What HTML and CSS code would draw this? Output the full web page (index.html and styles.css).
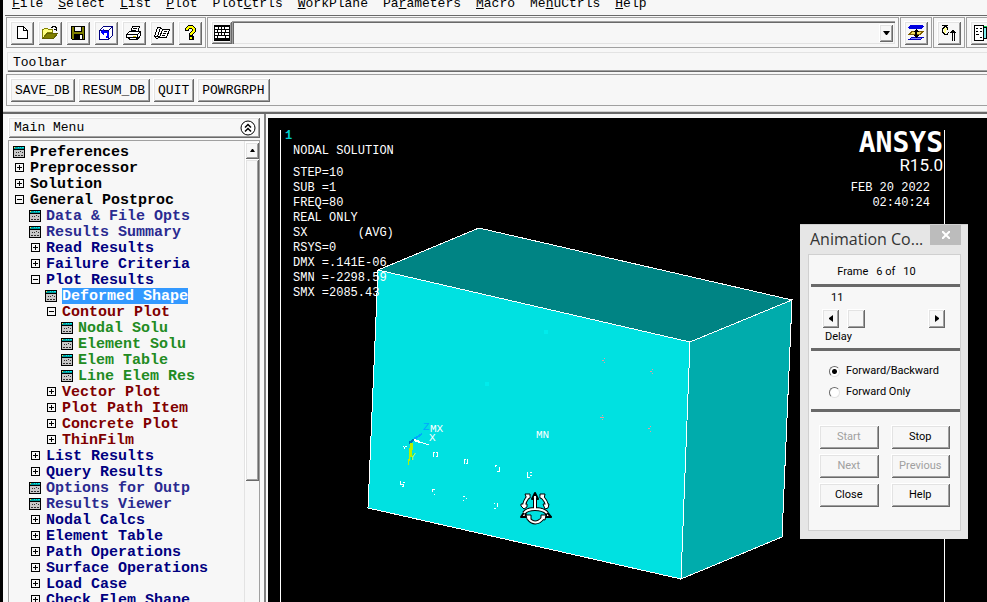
FILE: index.html
```html
<!DOCTYPE html>
<html lang="en">
<head>
<meta charset="utf-8">
<title>ANSYS</title>
<link rel="stylesheet" href="styles.css">
</head>
<body>
<svg class="defs" aria-hidden="true">
  <symbol id="form" viewBox="0 0 12 12">
    <path fill="#000" d="M0 0h12v12H0z"/><path fill="#c8c8c8" d="M1 4h10v7H1z"/><path fill="#009c9c" d="M1 1h10v2H1z"/>
    <path fill="#00f0f0" d="M5 1h1v1H5zM7 1h1v1H7zM9 1h2v1H9z"/><path fill="#ffe040" d="M1 1h1v1H1z"/>
    <path fill="#303030" d="M3 6h1v1H3zM5 6h1v1H5zM7 5h1v1H7zM9 6h1v1H9zM2 9h2v1H2zM5 9h2v1H5zM8 9h2v1H8z"/>
  </symbol>
  <symbol id="plus" viewBox="0 0 12 12"><path fill="none" stroke="#000" d="M2.500 1.500h8v8h-8zM4 5.500h5M6.500 3v5"/></symbol>
  <symbol id="minus" viewBox="0 0 12 12"><path fill="none" stroke="#000" d="M2.500 1.500h8v8h-8zM4 5.500h5"/></symbol>
</svg>
<div class="app">
  <nav class="menubar">
    <a href="#"><u>F</u>ile</a><a href="#"><u>S</u>elect</a><a href="#"><u>L</u>ist</a><a href="#"><u>P</u>lot</a><a href="#">Plot<u>C</u>trls</a><a href="#"><u>W</u>orkPlane</a><a href="#">Pa<u>r</u>ameters</a><a href="#"><u>M</u>acro</a><a href="#">Me<u>n</u>uCtrls</a><a href="#"><u>H</u>elp</a>
  </nav>

  <div class="tools">
    <div class="frame">
      <button class="raised tool" aria-label="New"><svg viewBox="0 0 16 16"><path fill="#fff" stroke="#000" d="M3.500 1.500h6l4 4v8h-10zM9.500 1.500v4h4"/></svg></button>
      <button class="raised tool" aria-label="Open"><svg viewBox="0 0 16 16"><path fill="#ffff80" stroke="#808000" d="M.5 13.500v-9h1l1-1h3l1 1h4v3h-5z"/><path fill="#808000" stroke="#606000" d="M1 13.500l4-5h10.500l-4 5z"/><path fill="none" stroke="#000" d="M9 2.500h1l1-1h2l1 1v3M11.500 4.500h3V2"/></svg></button>
      <button class="raised tool" aria-label="Save"><svg viewBox="0 0 16 16"><path fill="#808000" stroke="#000" d="M1.500 1.500h13v13h-12l-1-1z"/><path fill="#f7f7f7" stroke="#000" d="M4.500 1.500h7v5h-7z"/><path fill="#000" d="M4 9h9v5H4z"/><path fill="#fff" d="M10 10h2v4h-2z"/></svg></button>
      <button class="raised tool" aria-label="Resume"><svg viewBox="0 0 16 16"><path fill="#fff" stroke="#000080" d="M1.500 5.500l4-4h9v9l-4 4h-9zM1.500 5.500h9v9M10.500 5.500l4-4"/><path fill="none" stroke="#00f" stroke-width="2" d="M5 7h3q3 0 2 4l-2 2"/><path fill="#00f" d="M2 7l4-4v8z"/></svg></button>
      <button class="raised tool" aria-label="Print"><svg viewBox="0 0 16 16"><path fill="#fff" stroke="#000" d="M4.500 7.500l2-6h7l-2 6zM7 3.500h4M6 5.500h4"/><path fill="#fff" stroke="#000" d="M.5 9.500l3-3h11l-3 3zM.5 9.500h11v3H.5zM2.500 12.500h8v2h-7zM11.500 9.500l3-3v4l-3 4z"/><path stroke="#e0c800" d="M7 11.500h3"/></svg></button>
      <button class="raised tool" aria-label="Report"><svg viewBox="0 0 16 16"><path fill="#fff" stroke="#000" d="M3.500 2.500h3l-3 9h-3zM6.500 2.500l2 2h7l-3 8h-7l-2-1M.5 11.500l2 2 3-1M8.500 4.500l-3 8M10 6.500h3M9 8.500h3M8 10.500h3"/></svg></button>
      <button class="raised tool" aria-label="Help"><svg viewBox="0 0 16 16"><path fill="none" stroke="#000" stroke-width="4" d="M5 6V4l2-2h3l2 2v2l-3 3v2"/><path fill="#000" d="M7 11h5v4H7z"/><path fill="none" stroke="#ff0" stroke-width="2" d="M5 5V4l2-2h3l2 2v2l-3 3v1M9 12v2"/></svg></button>
    </div>
    <div class="frame command">
      <button class="raised keys" aria-label="Command window"><svg viewBox="0 0 16 16"><path d="M0 0h16v16H0z"/><path fill="#fff" d="M1 2h3v2H1zM5 2h2v2H5zM8 2h2v2H8zM11 2h4v2h-4zM1 5h2v2H1zM4 5h3v2H4zM8 5h3v2H8zM12 5h3v2h-3zM1 8h3v2H1zM5 8h2v2H5zM8 8h2v2H8zM11 8h4v2h-4zM1 11h2v2H1zM4 11h7v2H4zM12 11h3v2h-3z"/></svg></button>
      <div class="combo"><input type="text" aria-label="Command"><button class="raised drop" aria-label="History"><svg viewBox="0 0 7 4"><path d="M0 0h7L4 4H3z"/></svg></button></div>
    </div>
    <div class="frame"><button class="raised tool" aria-label="Raise hidden"><svg viewBox="0 0 16 16"><path fill="#0000e0" d="M2 0h12l2 1-2 3H2L0 3z"/><path fill="#f0e060" stroke="#806000" d="M1 9.500l3-3h11l-3 3z"/><path fill="#8080ff" stroke="#0000c0" d="M1 14.500l3-2h11l-3 2z"/><path d="M8 4l3 3H9v3h2l-3 3-3-3h2V7H5z"/></svg></button></div>
    <div class="frame"><button class="raised tool" aria-label="Reset picking"><svg viewBox="0 0 16 16"><path fill="none" stroke="#000" d="M1 .5h6M3.500 1v1l-2 2v3l2 2h3l1-2M4.500 1l2 2v2"/><path fill="#ffff90" d="M3 3h2v5H3zM5 3h1v2H5z"/><path d="M12 4l3 4h-1v8h-1V8h-1v8h-1V8H9z"/></svg></button></div>
    <div class="frame last"><button class="raised tool" aria-label="Contact manager"><svg viewBox="0 0 16 16"><path fill="#00e050" d="M10 1h6v13h-6z"/><path fill="#fff" stroke="#000" d="M.5.5h9v15h-9z"/><path fill="#80f0f0" stroke="#000" d="M9.500 2.500h3v11h-3z"/><path stroke="#000" d="M2 3.500h2M6 3.500h2M2 6.500h2M6 6.500h2M2 9.500h3M6 12.500h2" /></svg></button></div>
  </div>

  <h2 class="caption">Toolbar</h2>
  <div class="frame abbreviations">
    <button class="raised">SAVE_DB</button><button class="raised">RESUM_DB</button><button class="raised">QUIT</button><button class="raised">POWRGRPH</button>
  </div>

  <main class="work">
    <aside class="side">
      <div class="side-head"><h2>Main Menu</h2><button aria-label="Collapse"><svg viewBox="0 0 16 16"><circle cx="8" cy="8" r="7" fill="#fff" stroke="#000"/><path fill="none" stroke="#000" stroke-width="1.500" d="M5 7.500l3-3 3 3M5 11.500l3-3 3 3"/></svg></button></div>
      <div class="tree">
        <ul>
          <li><a href="#"><svg><use href="#form"/></svg><span>Preferences</span></a></li>
          <li><a href="#"><svg><use href="#plus"/></svg><span>Preprocessor</span></a></li>
          <li><a href="#"><svg><use href="#plus"/></svg><span>Solution</span></a></li>
          <li><a href="#"><svg><use href="#minus"/></svg><span>General Postproc</span></a>
            <ul class="navy">
              <li><a href="#" class="leaf"><svg><use href="#form"/></svg><span>Data &amp; File Opts</span></a></li>
              <li><a href="#" class="leaf"><svg><use href="#form"/></svg><span>Results Summary</span></a></li>
              <li><a href="#"><svg><use href="#plus"/></svg><span>Read Results</span></a></li>
              <li><a href="#"><svg><use href="#plus"/></svg><span>Failure Criteria</span></a></li>
              <li><a href="#"><svg><use href="#minus"/></svg><span>Plot Results</span></a>
                <ul class="maroon">
                  <li><a href="#" class="selected"><svg><use href="#form"/></svg><span>Deformed Shape</span></a></li>
                  <li><a href="#"><svg><use href="#minus"/></svg><span>Contour Plot</span></a>
                    <ul class="green">
                      <li><a href="#"><svg><use href="#form"/></svg><span>Nodal Solu</span></a></li>
                      <li><a href="#"><svg><use href="#form"/></svg><span>Element Solu</span></a></li>
                      <li><a href="#"><svg><use href="#form"/></svg><span>Elem Table</span></a></li>
                      <li><a href="#"><svg><use href="#form"/></svg><span>Line Elem Res</span></a></li>
                    </ul>
                  </li>
                  <li><a href="#"><svg><use href="#plus"/></svg><span>Vector Plot</span></a></li>
                  <li><a href="#"><svg><use href="#plus"/></svg><span>Plot Path Item</span></a></li>
                  <li><a href="#"><svg><use href="#plus"/></svg><span>Concrete Plot</span></a></li>
                  <li><a href="#"><svg><use href="#plus"/></svg><span>ThinFilm</span></a></li>
                </ul>
              </li>
              <li><a href="#"><svg><use href="#plus"/></svg><span>List Results</span></a></li>
              <li><a href="#"><svg><use href="#plus"/></svg><span>Query Results</span></a></li>
              <li><a href="#" class="leaf"><svg><use href="#form"/></svg><span>Options for Outp</span></a></li>
              <li><a href="#" class="leaf"><svg><use href="#form"/></svg><span>Results Viewer</span></a></li>
              <li><a href="#"><svg><use href="#plus"/></svg><span>Nodal Calcs</span></a></li>
              <li><a href="#"><svg><use href="#plus"/></svg><span>Element Table</span></a></li>
              <li><a href="#"><svg><use href="#plus"/></svg><span>Path Operations</span></a></li>
              <li><a href="#"><svg><use href="#plus"/></svg><span>Surface Operations</span></a></li>
              <li><a href="#"><svg><use href="#plus"/></svg><span>Load Case</span></a></li>
              <li><a href="#"><svg><use href="#plus"/></svg><span>Check Elem Shape</span></a></li>
            </ul>
          </li>
        </ul>
        <div class="scroll"><button class="raised" aria-label="Scroll up"><svg viewBox="0 0 5 3"><path d="M2 0h1l2 3H0z"/></svg></button><div class="raised thumb"></div></div>
      </div>
    </aside>

    <section class="plot">
      <svg class="scene" viewBox="268 118 719 484" preserveAspectRatio="xMinYMin slice" shape-rendering="crispEdges">
        <path stroke="#fff" d="M280.500 130v480M944.500 130v480"/>
        <g stroke="#fff" stroke-width="1">
          <path fill="#008484" d="M378 270L479 228 792 300 690 342z"/>
          <path fill="#00acac" d="M690 342L792 300 782 537 681 579z"/>
          <path fill="#00e1e1" d="M378 270L690 342 681 579 368 508z"/>
        </g>
        <g class="labels">
          <text x="423" y="430" fill="#00a8ff">Z</text><text x="430" y="432" fill="#fff">MX</text><text x="429" y="441" fill="#fff">X</text><text x="409" y="460" fill="#c0ff00">Y</text><text x="536" y="438" fill="#fff">MN</text>
        </g>
        <path stroke="#0078b8" stroke-width="2" d="M409 443l6-4"/><path stroke="#00a8ff" stroke-width="2" d="M414 439l8-5"/>
        <path stroke="#fff" stroke-width="2" d="M414 440l6 2"/><path stroke="#fff" d="M420 442l9 3"/>
        <path fill="#b8f000" d="M410 443h3l-1 14-2 0-1 8h-1z"/>
        <g fill="none" stroke="#fff">
          <path d="M403 446.500h1M405 446.500h2M404.500 447v2M433 452.500h2M433.500 452v5M436 452.500h1.500v4h-2M464 459.500h2M464.500 459v5M467.500 459v4h-2M495 465.500h2M495.500 465v2M499.500 467v4h-3M527.500 472v5h2M530 472.500h2M530 475.500h2M400.500 481v3h3v2h-2M403 482.500h2M432 489.500h3M432.500 489v3M434 494.500h1M463 496.500h2M463 500.500h1M466 498.500h1M494 503.500h1M494 508.500h2M497.500 503v4"/>
        </g>
        <path stroke="#e0a0a0" d="M602 360.500h2M604 358.500h1M604 362.500h1M650 371.500h2M652 369.500h1M652 373.500h1M600 417.500h4M602 415.500h1M602 419.500h1M648 428.500h2M650 426.500h1M650 431.500h1"/>
        <path fill="#00ecec" d="M544 330h4v4h-4zM485 382h4v4h-4z"/>
        <g shape-rendering="auto" stroke-linejoin="round" fill="none">
          <path stroke="#000" stroke-width="4" d="M535 496v13M524 513q3-4 11-4t12 4M524 507q0-6 5-11M541 496q6 5 6 11M528 518q7 9 15 0"/>
          <path stroke="#000" stroke-width="2" fill="#fff" d="M535 493l3 6h-6zM525 511l1 6h-5zM546 511l5 6h-5z"/>
          <path stroke="#000" fill="#fff" d="M521 504h6v3l-3 2-3-3zM543 504h6l-1 4-3 1zM525 494h5v4l-3 1zM540 494h5l-1 5-4-1zM526 515h5v5l-4-1zM541 515h5l-1 5-4-1z"/>
          <path stroke="#fff" stroke-width="2" d="M535 496v13M524 513q3-4 11-4t12 4M524 507q0-6 5-11M541 496q6 5 6 11M528 518q7 9 15 0"/>
        </g>
      </svg>
      <div class="readout">
        <b>1</b>
        <p>NODAL SOLUTION</p>
        <pre>STEP=10
SUB =1
FREQ=80
REAL ONLY
SX       (AVG)
RSYS=0
DMX =.141E-06
SMN =-2298.59
SMX =2085.43</pre>
      </div>
      <div class="brand"><strong>ANSYS</strong><span>R15.0</span><pre>FEB 20 2022
02:40:24</pre></div>

      <form class="dialog">
        <header><h3>Animation Co...</h3><button type="button" aria-label="Close window"><svg viewBox="0 0 8 8"><path stroke="#fff" stroke-width="2" d="M0 0l8 8M8 0L0 8"/></svg></button></header>
        <div class="panel">
          <p class="count"><span>Frame</span><span>6 of</span><span>10</span></p>
          <div class="delay">
            <output for="delay">11</output>
            <div class="slider"><button type="button" class="raised" aria-label="Decrease"><svg viewBox="0 0 4 7"><path d="M4 0v7L0 4V3z"/></svg></button><input id="delay" type="range" min="0" max="100" value="11"><button type="button" class="raised" aria-label="Increase"><svg viewBox="0 0 4 7"><path d="M0 0v7l4-3V3z"/></svg></button></div>
            <label for="delay">Delay</label>
          </div>
          <div class="modes">
            <label><input type="radio" name="mode" checked>Forward/Backward</label>
            <label><input type="radio" name="mode">Forward Only</label>
          </div>
          <div class="actions">
            <button type="button" class="raised" disabled>Start</button><button type="button" class="raised">Stop</button>
            <button type="button" class="raised" disabled>Next</button><button type="button" class="raised" disabled>Previous</button>
            <button type="button" class="raised">Close</button><button type="button" class="raised">Help</button>
          </div>
        </div>
      </form>
    </section>
  </main>
</div>
</body>
</html>
```
FILE: styles.css
```css
* { box-sizing: border-box; }
body { margin: 0; background: #000; color: #000; font: 13px/16px "Liberation Mono", monospace; }
button, input { font: inherit; color: inherit; }
button { padding: 0; border: 0; background: #f7f7f7; display: flex; align-items: center; justify-content: center; }
h2, h3, p, pre, ul { margin: 0; padding: 0; font: inherit; }
ul { list-style: none; }
a { color: inherit; text-decoration: none; }
svg { display: block; }
.defs { position: absolute; width: 0; height: 0; }

.app { height: 100vh; display: flex; flex-direction: column; overflow: hidden; background: #f7f7f7; border-left: 3px solid #000; }
.raised { box-shadow: inset 1px 1px #fff, inset -1px -1px #696969, inset 2px 2px #e3e3e3, inset -2px -2px #a0a0a0; background: #f7f7f7; }
.frame { border: 1px solid #a0a0a0; display: flex; align-items: center; }

.menubar { flex: none; height: 16px; margin-left: 2px; padding: 0 7px 3px; display: flex; align-items: flex-end; gap: 15px; overflow: hidden; border-bottom: 1px solid #696969; }

.tools { flex: none; margin: 1px 0 4px 3px; display: flex; gap: 1px; }
.tools .frame { height: 31px; padding: 0 3px; gap: 4px; }
.tool { width: 24px; height: 24px; }
.tool svg, .keys svg { width: 16px; height: 16px; shape-rendering: crispEdges; }
.tools .command { flex: 1; gap: 0; }
.keys { width: 21px; height: 23px; }
.combo { flex: 1; height: 23px; display: flex; align-items: center; padding: 3px 2px 2px 4px; box-shadow: inset 1px 1px #a0a0a0, inset 2px 2px #696969, inset -1px -1px #e3e3e3; }
.combo input { flex: 1; min-width: 0; border: 0; padding: 0; background: transparent; outline: 0; }
.drop { width: 14px; height: 18px; }
.drop svg { width: 7px; height: 4px; }
.tools .last { width: 21px; overflow: hidden; border-right: 0; }
.last .tool { flex: none; }

.caption { flex: none; height: 20px; margin-left: 4px; padding: 2px 5px; border-top: 1px solid #e3e3e3; border-left: 1px solid #e3e3e3; box-shadow: inset 0 -1px #696969, inset 0 -2px #a0a0a0; }
.abbreviations { flex: none; height: 32px; margin: 2px 0 6px 3px; padding: 0 3px; border-right: 0; gap: 3px; }
.abbreviations button { height: 24px; padding: 2px 5px 0; }

.work { flex: 1; min-height: 0; display: flex; border-top: 2px solid #696969; box-shadow: 0 -1px #d0d0d0; }
.side { width: 263px; flex: none; display: flex; flex-direction: column; padding: 3px 4px 0 5px; border-right: 2px solid #808080; }
.side-head { flex: none; height: 21px; margin-bottom: 2px; display: flex; align-items: center; justify-content: space-between; padding: 1px 4px 0 6px; box-shadow: inset 1px 1px #fff, inset -1px -1px #696969, inset 2px 2px #e3e3e3, inset -2px -2px #a0a0a0; }
.side-head button { background: none; }
.side-head svg { width: 16px; height: 16px; }
.tree { flex: 1; min-height: 0; overflow: hidden; display: flex; justify-content: space-between; border: 1px solid #a0a0a0; border-bottom: 0; font-size: 15px; font-weight: bold; }
.tree > ul { padding: 3px 0 0 4px; }
.tree ul ul { padding-left: 16px; }
.tree a { display: flex; align-items: center; gap: 5px; height: 16px; white-space: pre; }
.tree a svg { width: 12px; height: 12px; shape-rendering: crispEdges; }
.tree a span { height: 16px; line-height: 18px; }
.navy { color: #000080; }
.navy .leaf { color: #2a2a90; }
.maroon { color: #800000; }
.green { color: #228b22; }
.tree .selected span { background: #3399ff; color: #fff; }
.scroll { flex: none; width: 15px; padding-top: 1px; border-left: 1px solid #e3e3e3; }
.scroll button { width: 14px; height: 17px; }
.scroll svg { width: 5px; height: 3px; }
.thumb { height: 322px; }

.plot { flex: 1; min-width: 0; position: relative; overflow: hidden; margin: 4px 0 0 2px; background: #000; color: #fff; font-size: 12px; line-height: 15px; }
.scene { position: absolute; width: 100%; height: 100%; }
.labels { font: 11px "Liberation Mono", monospace; }
.plot pre { font: inherit; }
.readout { position: absolute; left: 17px; top: 11px; }
.readout b { display: block; color: #00d0d0; }
.readout p, .readout pre { margin-left: 8px; }
.readout pre { margin-top: 7px; }
.brand { position: absolute; right: 44px; top: 11px; display: flex; flex-direction: column; align-items: flex-end; }
.brand strong { font: bold 28px/28px "DejaVu Sans Mono", monospace; }
.brand span { font: 17px/16px Roboto, sans-serif; }
.brand pre { margin: 8px 13px 0 0; text-align: right; }

.dialog { position: absolute; left: 532px; top: 106px; width: 168px; padding: 0 7px 8px 8px; background: #e6e6e6; border-top: 1px solid #d0d0d0; color: #000; font: 11px/16px Roboto, sans-serif; }
.dialog header { display: flex; justify-content: space-between; align-items: flex-start; height: 29px; }
.dialog h3 { padding-left: 2px; font: 16px/28px "Open Sans", sans-serif; color: #333; white-space: nowrap; }
.dialog header button { width: 31px; height: 20px; background: #bcbcbc; }
.dialog header svg { width: 8px; height: 8px; }
.panel { border: 1px solid #d0d0d0; background: #f7f7f7; padding: 0 0 23px 2px; }
.count { display: flex; justify-content: center; gap: 8px; height: 32px; padding: 9px 18px 0 0; border-bottom: 3px solid #696969; }
.delay { border-bottom: 3px solid #696969; height: 64px; padding: 3px 15px 0 11px; }
.delay output { display: block; height: 19px; padding-left: 9px; }
.slider { display: flex; height: 19px; margin-bottom: 1px; }
.slider button { flex: none; width: 17px; height: 19px; }
.slider button svg { width: 4px; height: 7px; }
.slider input { flex: 1; min-width: 0; margin: 0; appearance: none; background: none; height: 19px; }
.slider input::-webkit-slider-thumb { appearance: none; width: 18px; height: 19px; background: #f7f7f7; box-shadow: inset 1px 1px #fff, inset -1px -1px #696969, inset 2px 2px #e3e3e3, inset -2px -2px #a0a0a0; }
.delay label { padding-left: 3px; }
.modes { height: 61px; padding: 12px 0 0 18px; border-bottom: 3px solid #696969; }
.modes label { display: flex; align-items: center; gap: 6px; margin-bottom: 5px; white-space: nowrap; }
.modes input { appearance: none; width: 11px; height: 11px; margin: 0; border-radius: 50%; border: 1px solid; border-color: #696969 #e3e3e3 #e3e3e3 #696969; background: #fff; }
.modes input:checked { background: radial-gradient(circle, #000 2px, #fff 3px); }
.actions { display: grid; grid-template-columns: 1fr 1fr; gap: 5px 12px; padding: 13px 10px 0 8px; }
.actions button { height: 24px; }
.actions button:disabled { color: #a0a0a0; }
```
